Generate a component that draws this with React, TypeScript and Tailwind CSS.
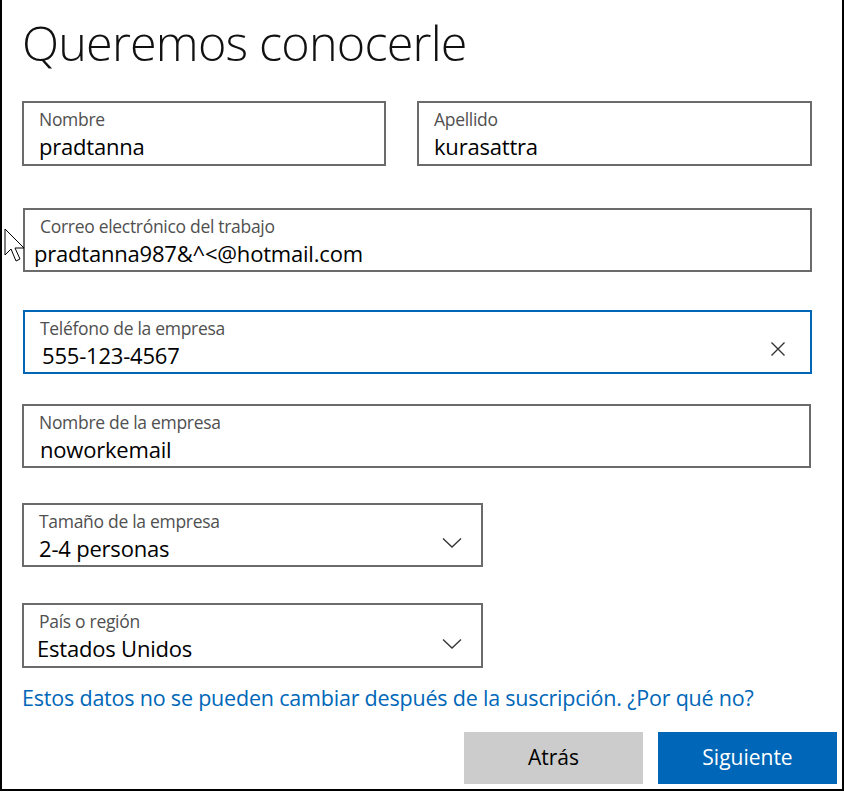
import React from 'react'

const font = { fontFamily: '"Open Sans", "Noto Sans", sans-serif' }

function Field({
  label,
  value,
  className = '',
  focused = false,
  valueClass = '',
  right,
}: {
  label: string
  value: string
  className?: string
  focused?: boolean
  valueClass?: string
  right?: React.ReactNode
}) {
  return (
    <div
      className={`relative flex items-center border-2 ${
        focused ? 'border-[#0067b8]' : 'border-[#6b6b6b]'
      } ${className}`}
    >
      <div className="flex-1 flex flex-col pl-[15px] pt-[2px]">
        <span className="text-[17.5px] leading-[22px] text-[#505050] tracking-[-0.3px]">{label}</span>
        <span className={`text-[22px] leading-[30px] mt-[1px] text-black tracking-[-0.2px] ${valueClass}`}>{value}</span>
      </div>
      {right}
    </div>
  )
}

function Chevron() {
  return (
    <svg width="20" height="12" viewBox="0 0 20 12" className="mr-[19px] mt-[16px]">
      <path d="M1 1.5 L10 10 L19 1.5" fill="none" stroke="#333" strokeWidth="1.3" />
    </svg>
  )
}

function ClearIcon() {
  return (
    <svg width="16" height="16" viewBox="0 0 16 16" className="mr-[24px] mt-[14px]">
      <path d="M1.5 1.5 L14.5 14.5 M14.5 1.5 L1.5 14.5" fill="none" stroke="#333" strokeWidth="1.4" />
    </svg>
  )
}

export default function App() {
  return (
    <div className="w-[844px] h-[792px] bg-white relative overflow-hidden" style={font}>
      <div className="h-[791px] w-[844px] border-l-2 border-r-2 border-b-2 border-black pl-[20px] pr-[5px]">
        <h1 className="text-[48.5px] font-light leading-[64px] pt-[10px] text-[#111] tracking-[-0.8px]">
          Queremos conocerle
        </h1>

        <div className="flex gap-[31px] mt-[27px]">
          <Field label="Nombre" value="pradtanna" className="w-[364px] h-[65px]" />
          <Field label="Apellido" value="kurasattra" className="w-[395px] h-[65px]" />
        </div>

        <Field
          label="Correo electrónico del trabajo"
          value="pradtanna987&^<@hotmail.com"
          className="w-[789px] ml-[1px] mt-[42px] h-[64px]"
          valueClass="-ml-[6px]"
        />

        <Field
          label="Teléfono de la empresa"
          value="555-123-4567"
          focused
          className="w-[789px] ml-[1px] mt-[38px] h-[64px]"
          valueClass="ml-[2px]"
          right={<ClearIcon />}
        />

        <Field label="Nombre de la empresa" value="noworkemail" className="w-[789px] mt-[30px] h-[64px]" valueClass="ml-[1px]" />

        <Field
          label="Tamaño de la empresa"
          value="2-4 personas"
          className="w-[461px] mt-[35px] h-[64px]"
          right={<Chevron />}
        />

        <Field
          label="País o región"
          value="Estados Unidos"
          className="w-[461px] mt-[36px] h-[65px]"
          valueClass="-ml-[2px]"
          right={<Chevron />}
        />

        <p className="mt-[15px] text-[21.5px] leading-[30px] text-[#0067b8] tracking-[-0.2px]">
          Estos datos no se pueden cambiar después de la suscripción. ¿Por qué no?
        </p>

        <div className="flex justify-end gap-[15px] mt-[19px] pr-[0px]">
          <button className="w-[179px] h-[52px] bg-[#cccccc] text-[21px] text-black">Atrás</button>
          <button className="w-[179px] h-[52px] bg-[#0067b8] text-[21px] text-white">Siguiente</button>
        </div>
      </div>

      <svg
        width="24"
        height="40"
        viewBox="0 0 24 40"
        className="absolute left-[4px] top-[228px]"
      >
        <path
          d="M1 1 L1 27 L7 21 L12 33 L16 31 L11 20 L20 20 Z"
          fill="white"
          stroke="black"
          strokeWidth="1"
          strokeLinejoin="miter"
        />
      </svg>
    </div>
  )
}
